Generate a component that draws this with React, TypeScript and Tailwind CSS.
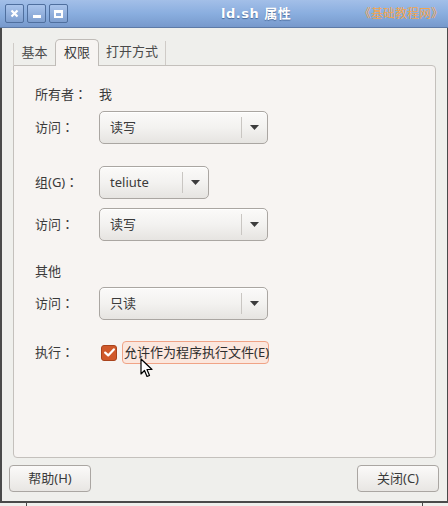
import React from 'react';

const font = { fontFamily: '"Noto Sans", "Noto Sans CJK SC", sans-serif' };
const labelFont = { fontFamily: '"Noto Sans", "Noto Sans CJK TC", sans-serif' };

function TitleButton({ kind }: { kind: 'close' | 'min' | 'max' }) {
    return (
        <div className="w-[19px] h-[19px] border border-[#4f6f9e] rounded-[2px] bg-gradient-to-b from-[#a9c4ec] to-[#7f9fcf] flex items-center justify-center">
            {kind === 'close' && (
                <svg width="9" height="9" viewBox="0 0 9 9">
                    <path d="M1.5 1.5 L7.5 7.5 M7.5 1.5 L1.5 7.5" stroke="#fff" strokeWidth="2.2" />
                </svg>
            )}
            {kind === 'min' && <div className="w-[8px] h-[3px] bg-white mt-[6px]" />}
            {kind === 'max' && <div className="w-[9px] h-[8px] border-2 border-white border-t-[3px]" />}
        </div>
    );
}

function Combo({ value, width }: { value: string; width: string }) {
    return (
        <div className={`${width} h-[33px] rounded-[5px] border border-[#aaa6a2] bg-gradient-to-b from-[#fbfaf9] via-[#f3f2f0] to-[#e6e4e1] flex items-center shadow-[inset_0_1px_0_#fff]`}>
            <span className="pl-[10px] flex-1 text-[13px] text-[#3a3a3a]">{value}</span>
            <div className="h-[21px] w-px bg-[#c9c6c2]" />
            <div className="w-[25px] flex justify-center">
                <svg width="9" height="5" viewBox="0 0 9 5">
                    <path d="M0 0 H9 L4.5 5 Z" fill="#3c3c3c" />
                </svg>
            </div>
        </div>
    );
}

function Label({ children }: { children: React.ReactNode }) {
    return (
        <div className="w-[64px] text-[13px] text-[#3a3a3a]" style={labelFont}>
            {children}
        </div>
    );
}

export default function App() {
    return (
        <div className="w-[448px] h-[506px] overflow-hidden flex flex-col bg-[#4a4a4a] relative" style={font}>
            {/* title bar */}
            <div className="h-[28px] shrink-0 flex items-center bg-gradient-to-b from-[#a3bfe8] via-[#8aaedf] to-[#7799cc] border-b border-[#5d7aa6]">
                <div className="flex gap-[3px] pl-[5px]">
                    <TitleButton kind="close" />
                    <TitleButton kind="min" />
                    <TitleButton kind="max" />
                </div>
                <div className="ml-[153px] text-[13px] font-bold text-white tracking-[0.5px] [text-shadow:0_1px_1px_#4a6a9a]" style={{ fontFamily: '"DejaVu Sans", "Noto Sans CJK SC", sans-serif' }}>
                    ld.sh 属性
                </div>
                <div className="ml-auto pr-[5px] text-[12px] text-[#f3a54d]" style={font}>
                    《基础教程网》
                </div>
            </div>

            {/* body */}
            <div className="flex-1 flex flex-col bg-[#efefec] ml-[2px] mr-px">
                {/* tabs */}
                <div className="flex items-end h-[37px] pl-[11px]">
                    <div className="w-[42px] h-[22px] border-l border-[#cfcbc7] flex items-center justify-center text-[13px] text-[#4a4a4a] pb-[2px]">基本</div>
                    <div className="w-[44px] h-[27px] border border-b-0 border-[#bfbbb7] rounded-t-[5px] bg-[#f7f4f2] flex items-center justify-center text-[13px] text-[#3a3a3a] relative top-px z-10 pb-[1px]">权限</div>
                    <div className="w-[67px] h-[24px] border-r border-[#cfcbc7] flex items-center justify-center text-[13px] text-[#4a4a4a] pb-[2px]">打开方式</div>
                </div>

                {/* notebook panel */}
                <div className="ml-[11px] mr-[11px] h-[393px] border border-[#c4c0bc] rounded-b-[4px] rounded-tr-[4px] bg-[#f7f4f2] pl-[21px] flex flex-col">
                    <div className="mt-[19px] h-[20px] flex items-center">
                        <Label>所有者：</Label>
                        <span className="text-[13px] text-[#3a3a3a]">我</span>
                    </div>
                    <div className="mt-[6px] flex items-center">
                        <Label>访问：</Label>
                        <Combo value="读写" width="w-[169px]" />
                    </div>
                    <div className="mt-[22px] flex items-center">
                        <Label>组(G)：</Label>
                        <Combo value="teliute" width="w-[110px]" />
                    </div>
                    <div className="mt-[9px] flex items-center">
                        <Label>访问：</Label>
                        <Combo value="读写" width="w-[169px]" />
                    </div>
                    <div className="mt-[21px] h-[20px] flex items-center text-[13px] text-[#3a3a3a]">其他</div>
                    <div className="mt-[5px] flex items-center">
                        <Label>访问：</Label>
                        <Combo value="只读" width="w-[169px]" />
                    </div>
                    <div className="mt-[21px] h-[23px] flex items-center">
                        <Label>执行：</Label>
                        <div className="ml-[2px] w-[16px] h-[16px] rounded-[3px] bg-[#d0592b] border border-[#a9431d] flex items-center justify-center">
                            <svg width="11" height="9" viewBox="0 0 11 9">
                                <path d="M1.2 4.6 L4.2 7.4 L9.8 1.4" stroke="#fff" strokeWidth="2.2" fill="none" strokeLinecap="round" strokeLinejoin="round" />
                            </svg>
                        </div>
                        <div className="ml-[5px] h-[23px] w-[147px] rounded-[4px] border border-[#f0a386] bg-[#fbe7de] flex items-center pl-[1px] text-[13px] text-[#2e2e2e] whitespace-nowrap">
                            允许作为程序执行文件(E)
                        </div>
                    </div>
                </div>

                {/* dialog buttons */}
                <div className="flex justify-between mt-[7px] pl-[7px] pr-[8px]">
                    <button className="w-[82px] h-[27px] rounded-[4px] border border-[#aaa6a2] bg-gradient-to-b from-[#fbfaf9] to-[#e8e6e3] text-[13px] text-[#3a3a3a]">帮助(H)</button>
                    <button className="w-[82px] h-[27px] rounded-[4px] border border-[#aaa6a2] bg-gradient-to-b from-[#fbfaf9] to-[#e8e6e3] text-[13px] text-[#3a3a3a]">关闭(C)</button>
                </div>
            </div>

            {/* bottom frame */}
            <div className="h-[2px] shrink-0 bg-[#4a4a4a]" />
            <div className="h-[3px] shrink-0 bg-[#efefec] flex">
                <div className="ml-[26px] w-px bg-[#4a4a4a]" />
                <div className="ml-[395px] w-px bg-[#4a4a4a]" />
            </div>

            {/* mouse pointer */}
            <svg className="absolute left-[140px] top-[358px]" width="13" height="20" viewBox="0 0 13 20">
                <path d="M1 1 L1 16 L4.5 12.5 L7 18.5 L9.5 17.5 L7 11.5 L12 11.5 Z" fill="#fff" stroke="#000" strokeWidth="1.2" strokeLinejoin="round" />
            </svg>
        </div>
    );
}
